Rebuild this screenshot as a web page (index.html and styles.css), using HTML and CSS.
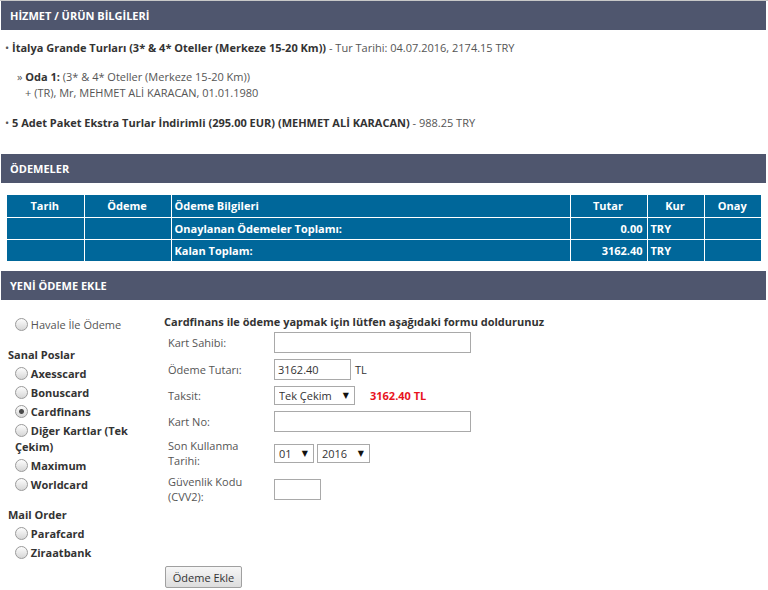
FILE: index.html
```html
<!DOCTYPE html>
<html lang="tr">
<head>
<meta charset="utf-8">
<link rel="stylesheet" href="styles.css">
</head>
<body>
<div class="page">
  <div class="sec-head">HİZMET / ÜRÜN BİLGİLERİ</div>
  <div class="items">
    <div class="item">• <b>İtalya Grande Turları (3* &amp; 4* Oteller (Merkeze 15-20 Km))</b> - Tur Tarihi: 04.07.2016, 2174.15 TRY</div>
    <div class="room">
      <div>» <b>Oda 1:</b> (3* &amp; 4* Oteller (Merkeze 15-20 Km))</div>
      <div class="pax">+ (TR), Mr, MEHMET ALİ KARACAN, 01.01.1980</div>
    </div>
    <div class="item">• <b>5 Adet Paket Ekstra Turlar İndirimli (295.00 EUR) (MEHMET ALİ KARACAN)</b> - 988.25 TRY</div>
  </div>

  <div class="sec-head">ÖDEMELER</div>
  <table class="pay">
    <tr>
      <th class="c1">Tarih</th>
      <th class="c2">Ödeme</th>
      <th class="c3 left">Ödeme Bilgileri</th>
      <th class="c4">Tutar</th>
      <th class="c5">Kur</th>
      <th class="c6">Onay</th>
    </tr>
    <tr>
      <td></td><td></td>
      <td class="left">Onaylanan Ödemeler Toplamı:</td>
      <td class="right">0.00</td>
      <td class="left">TRY</td>
      <td></td>
    </tr>
    <tr>
      <td></td><td></td>
      <td class="left">Kalan Toplam:</td>
      <td class="right">3162.40</td>
      <td class="left">TRY</td>
      <td></td>
    </tr>
  </table>

  <div class="sec-head">YENİ ÖDEME EKLE</div>
  <div class="new-pay">
    <div class="methods">
      <label class="opt havale"><input type="radio" name="m"> Havale İle Ödeme</label>
      <div class="group">Sanal Poslar</div>
      <label class="opt"><input type="radio" name="m"> Axesscard</label>
      <label class="opt"><input type="radio" name="m"> Bonuscard</label>
      <label class="opt"><input type="radio" name="m" checked> Cardfinans</label>
      <label class="opt wrap"><input type="radio" name="m"> Diğer Kartlar (Tek Çekim)</label>
      <label class="opt"><input type="radio" name="m"> Maximum</label>
      <label class="opt"><input type="radio" name="m"> Worldcard</label>
      <div class="group mail">Mail Order</div>
      <label class="opt"><input type="radio" name="m"> Parafcard</label>
      <label class="opt"><input type="radio" name="m"> Ziraatbank</label>
    </div>
    <div class="form">
      <div class="form-title">Cardfinans ile ödeme yapmak için lütfen aşağıdaki formu doldurunuz</div>
      <div class="rows">
        <div class="lbl">Kart Sahibi:</div>
        <div class="fld"><input class="txt wide" type="text"></div>

        <div class="lbl">Ödeme Tutarı:</div>
        <div class="fld"><input class="txt amount" type="text" value="3162.40"> <span class="unit">TL</span></div>

        <div class="lbl">Taksit:</div>
        <div class="fld"><span class="sel s-taksit"><select><option>Tek Çekim</option></select></span><span class="total">3162.40 TL</span></div>

        <div class="lbl">Kart No:</div>
        <div class="fld"><input class="txt wide" type="text"></div>

        <div class="lbl two">Son Kullanma Tarihi:</div>
        <div class="fld"><span class="sel s-ay"><select><option>01</option></select></span><span class="sel s-yil"><select><option>2016</option></select></span></div>

        <div class="lbl two">Güvenlik Kodu (CVV2):</div>
        <div class="fld"><input class="txt cvv" type="text"></div>
      </div>
      <button class="btn" type="button">Ödeme Ekle</button>
    </div>
  </div>
</div>
</body>
</html>
```

FILE: styles.css
```css
* { box-sizing: border-box; }
html, body { margin: 0; padding: 0; background: #fff; }
body {
  font-family: "Open Sans", "DejaVu Sans", sans-serif;
  font-size: 11px;
  color: #555;
}
.page {
  border-top: 1px solid #c8c8c8;
  padding: 0 2px 0 1px;
}
.sec-head {
  background: #4f566e;
  color: #fff;
  font-weight: bold;
  font-size: 11px;
  height: 29px;
  line-height: 29px;
  padding-left: 9px;
}
.items {
  padding: 9px 4px 22px 4px;
}
.items b { color: #333; }
.item { line-height: 18px; }
.room {
  padding: 12px 0 13px 12px;
  line-height: 16px;
}
.room .pax { padding-left: 8px; }

.pay {
  margin: 12px 0 10px 6px;
  border-collapse: collapse;
  width: 754px;
  background: #00679a;
  color: #fff;
  font-weight: bold;
  font-size: 11px;
}
.pay th, .pay td {
  border: 1px solid #fff;
  height: 22px;
  padding: 0 4px 0 3px;
  text-align: center;
}
.pay tr:first-child th { border-top: none; }
.pay tr th:first-child, .pay tr td:first-child { border-left: none; }
.pay tr th:last-child, .pay tr td:last-child { border-right: none; }
.pay tr:last-child td { border-bottom: none; }
.pay .left { text-align: left; }
.pay .right { text-align: right; }
.c1 { width: 77px; }
.c2 { width: 87px; }
.c3 { width: 399px; }
.c4 { width: 77px; }
.c5 { width: 57px; }
.c6 { width: 57px; }

.new-pay {
  display: flex;
  padding: 15px 0 0 7px;
}
.methods {
  width: 156px;
  display: flex;
  flex-direction: column;
  font-weight: bold;
  color: #333;
}
.opt {
  display: block;
  line-height: 19px;
  padding-left: 7px;
}
.opt input {
  -webkit-appearance: none;
  appearance: none;
  margin: 0;
  width: 13px;
  height: 13px;
  border: 1px solid #9a9a9a;
  border-radius: 50%;
  background: linear-gradient(#fdfdfd, #d6d6d6);
  vertical-align: -2px;
}
.opt input:checked {
  background: radial-gradient(circle, #4a4a4a 0, #4a4a4a 2px, rgba(0,0,0,0) 3px), linear-gradient(#fdfdfd, #d6d6d6);
}
.havale { font-weight: normal; color: #555; }
.group { margin-top: 11px; line-height: 19px; }
.mail { margin-top: 11px; }
.wrap { width: 140px; line-height: 16px; padding-top: 2px; padding-bottom: 1px; }

.form-title {
  font-weight: bold;
  color: #333;
  line-height: 14px;
}
.rows {
  display: grid;
  grid-template-columns: 110px auto;
  grid-template-rows: 21px 21px 19px 21px 30px 30px;
  row-gap: 6px;
  margin-top: 3px;
}
.lbl {
  padding-left: 4px;
  line-height: 21px;
  align-self: center;
}
.lbl.two { line-height: 15px; width: 96px; }
.fld { display: flex; align-items: center; }
.txt {
  font-family: inherit;
  font-size: 11px;
  color: #333;
  border: 1px solid #a9a9a9;
  height: 21px;
  padding: 0 3px;
  margin: 0;
  outline: none;
}
.wide { width: 197px; }
.amount { width: 77px; }
.cvv { width: 47px; }
.unit { margin-left: 4px; line-height: 21px; color: #333; }
.sel { position: relative; display: inline-block; margin-right: 3px; }
.sel select {
  appearance: none;
  -webkit-appearance: none;
  font-family: inherit;
  font-size: 11px;
  color: #333;
  background: #fff;
  border: 1px solid #a9a9a9;
  border-radius: 0;
  height: 19px;
  padding: 0 0 0 4px;
  margin: 0;
  display: block;
}
.sel::after {
  content: "▼";
  position: absolute;
  right: 6px;
  top: 3px;
  font-size: 8px;
  color: #111;
  pointer-events: none;
}
.s-taksit select { width: 81px; }
.s-ay select { width: 40px; }
.s-yil select { width: 53px; }
.total {
  color: #e8141e;
  font-weight: bold;
  margin-left: 12px;
  line-height: 19px;
}
.btn {
  display: block;
  margin-top: 62px;
  margin-left: 1px;
  font-family: inherit;
  font-size: 11px;
  color: #333;
  background: linear-gradient(#f6f6f6, #dddddd);
  border: 1px solid #a0a0a0;
  border-radius: 2px;
  height: 22px;
  width: 77px;
  padding: 0;
}
```
